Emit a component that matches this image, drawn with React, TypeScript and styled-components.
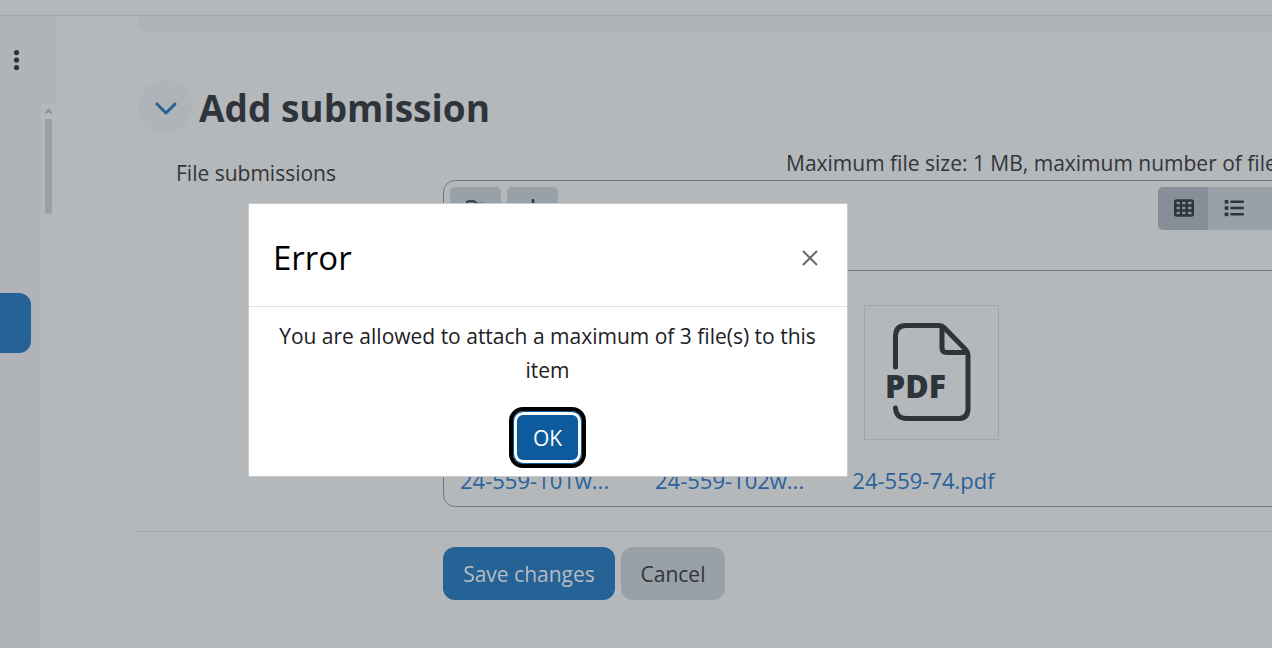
import React from "react";
import styled, { createGlobalStyle, css } from "styled-components";
import {
  FaChevronDown,
  FaDownload,
  FaEllipsisVertical,
  FaFolder,
  FaList,
  FaRegFolder,
  FaTableCells,
} from "react-icons/fa6";

const color = {
  page: "#b4b8bb",
  drawer: "#b0b4b9",
  line: "#a2a6aa",
  frame: "#6f7783",
  ink: "#2f343b",
  text: "#323539",
  blue: "#256296",
  link: "#2a629c",
  muted: "#98a0a8",
  mutedActive: "#868e98",
};

const GlobalStyle = createGlobalStyle`
  *, *::before, *::after { box-sizing: border-box; }
  body {
    margin: 0;
    background: ${color.page};
    color: ${color.text};
    font-family: "Open Sans", "Noto Sans", sans-serif;
    font-size: 21px;
    line-height: 34px;
  }
  button { font: inherit; cursor: pointer; }
`;

const Page = styled.div`
  display: flex;
  flex-direction: column;
  min-height: 100vh;
  overflow: hidden;
`;

const TopBar = styled.header`
  height: 16px;
  border-bottom: 1px solid ${color.line};
`;

const Body = styled.div`
  display: flex;
  flex: 1;
`;

const Drawer = styled.aside`
  display: flex;
  flex-direction: column;
  flex: 0 0 56px;
  background: ${color.drawer};
`;

const DrawerMenu = styled.button`
  display: flex;
  align-items: center;
  width: 32px;
  height: 88px;
  padding: 0 0 0 12px;
  border: 0;
  background: none;
  color: ${color.ink};
`;

const DrawerScroll = styled.div`
  display: flex;
  flex: 1;
  justify-content: space-between;
`;

const CurrentItem = styled.a`
  width: 31px;
  height: 60px;
  margin-top: 189px;
  border-radius: 0 12px 12px 0;
  background: ${color.blue};
`;

const ScrollTrack = styled.div`
  display: flex;
  flex-direction: column;
  gap: 5px;
  width: 15px;
  padding: 4px 4px 0;
  background: ${color.page};
`;

const ScrollThumb = styled.div`
  height: 95px;
  border-radius: 2px;
  background: #98a1aa;
`;

const Main = styled.main`
  flex: 1;
  min-width: 0;
  margin-left: 82px;
`;

const PreviousPanel = styled.div`
  height: 16px;
  border-radius: 0 0 0 10px;
  background: ${color.drawer};
`;

const SectionHeader = styled.div`
  display: flex;
  align-items: center;
  gap: 7px;
  margin-top: 48px;
`;

const CollapseButton = styled.button`
  display: flex;
  align-items: center;
  justify-content: center;
  width: 54px;
  height: 54px;
  padding: 0 0 0 2px;
  border: 0;
  border-radius: 50%;
  background: #afb4b8;
  color: ${color.blue};
`;

const SectionTitle = styled.h2`
  margin: 0;
  padding-top: 2px;
  color: ${color.ink};
  font-size: 37px;
  font-weight: 700;
  line-height: 52px;
`;

const FormRow = styled.div`
  display: flex;
  margin-top: 12px;
`;

const RowLabel = styled.div`
  flex: 0 0 305px;
  padding: 10px 0 0 38px;
`;

const RowContent = styled.div`
  flex: 1;
  min-width: 0;
`;

const Restrictions = styled.div`
  padding-left: 343px;
  white-space: nowrap;
`;

const FileManager = styled.div`
  margin-right: -120px;
  border: 1px solid ${color.frame};
  border-radius: 12px;
`;

const Toolbar = styled.div`
  display: flex;
  gap: 6px;
  height: 90px;
  padding: 6px;
  border-bottom: 1px solid ${color.frame};
`;

const ToolButton = styled.button<{ $active?: boolean }>`
  display: flex;
  align-items: center;
  justify-content: center;
  width: 51px;
  height: 43px;
  padding: 0;
  border: 0;
  border-radius: 5px;
  background: ${(p) => (p.$active ? color.mutedActive : color.muted)};
  color: ${color.ink};
`;

const ViewSwitch = styled.div`
  display: flex;
  margin: 0 77px 0 auto;

  ${ToolButton} {
    width: 50px;
    padding: 0 0 1px 1px;
    border-radius: 0;
  }
  ${ToolButton}:first-child { border-radius: 5px 0 0 5px; }
  ${ToolButton}:last-child { border-radius: 0 5px 5px 0; }
`;

const Files = styled.div`
  display: flex;
  gap: 48px;
  padding: 34px 16px 9px;
`;

const FileTile = styled.a`
  display: flex;
  flex-direction: column;
  gap: 23px;
  width: 147px;
  color: ${color.link};
  font-size: 22px;
  text-align: center;
  text-decoration: none;
  white-space: nowrap;
`;

const Thumb = styled.span`
  display: flex;
  align-items: center;
  justify-content: center;
  width: 135px;
  height: 135px;
  margin-left: 14px;
  border: 1px solid ${color.line};
  color: ${color.ink};
`;

const Actions = styled.div`
  display: flex;
  gap: 6px;
  margin-top: 24px;
  padding: 15px 0 47px 305px;
  border-top: 1px solid ${color.line};
`;

const buttonShape = css`
  height: 53px;
  padding: 0 19px;
  border: 0;
  border-radius: 12px;
`;

const PrimaryButton = styled.button`
  ${buttonShape}
  min-width: 172px;
  background: ${color.blue};
  color: #b8bcc0;
`;

const SecondaryButton = styled.button`
  ${buttonShape}
  min-width: 104px;
  background: ${color.muted};
  color: ${color.text};
`;

const ModalLayer = styled.div`
  position: fixed;
  inset: 0;
  padding: 203px 0 0 248px;
`;

const Dialog = styled.section`
  width: 600px;
  border: 1px solid #c9cbcd;
  background: #fff;
  color: #1d2125;
`;

const DialogHeader = styled.header`
  display: flex;
  align-items: center;
  justify-content: space-between;
  height: 103px;
  padding: 6px 24px 0;
  border-bottom: 1px solid #dee2e6;
`;

const DialogTitle = styled.h3`
  margin: 0;
  color: #000;
  font-size: 33px;
  font-weight: 400;
  line-height: 48px;
`;

const CloseButton = styled.button`
  display: flex;
  padding: 4px;
  border: 0;
  background: none;
  color: #6a6a6a;
`;

const DialogBody = styled.div`
  display: flex;
  flex-direction: column;
  align-items: center;
  gap: 24px;
  padding: 12px 25px 12px 24px;
  text-align: center;
`;

const Message = styled.p`
  margin: 0;
`;

const ConfirmButton = styled.button`
  width: 69px;
  height: 53px;
  padding: 0;
  border: 1px solid #0f5a9c;
  border-radius: 10px;
  outline: 4px solid #000;
  background: #0d5a9e;
  box-shadow: inset 0 0 0 3px #fff;
  color: #fff;
`;

function PdfIcon() {
  return (
    <svg width="90" height="104" viewBox="0 0 90 104" fill="none" aria-hidden="true">
      <g stroke="currentColor" strokeWidth="5" strokeLinecap="round" strokeLinejoin="round">
        <path d="M8.500 46V14.500Q9 4.500 19 4.500H52Q55 4.500 57.500 7L78.500 28.500Q81 31 81 34V88.500Q80.500 97.500 71.500 97.500H19Q9 97 8.500 87" />
        <path d="M55 7V27Q55 31.500 59.500 31.500H79" />
      </g>
      <text
        x="-2"
        y="77"
        fill="currentColor"
        fontFamily="Open Sans, sans-serif"
        fontSize="32"
        fontWeight="800"
      >
        PDF
      </text>
    </svg>
  );
}

const files = [
  { name: "24-559-101w...", icon: false },
  { name: "24-559-102w...", icon: false },
  { name: "24-559-74.pdf", icon: true },
];

export default function App() {
  return (
    <>
      <GlobalStyle />
      <Page>
        <TopBar />
        <Body>
          <Drawer>
            <DrawerMenu aria-label="Course index options">
              <FaEllipsisVertical size={24} style={{ width: 9 }} />
            </DrawerMenu>
            <DrawerScroll>
              <CurrentItem href="#current" aria-label="Current activity" />
              <ScrollTrack>
                <svg width="7" height="6" viewBox="0 0 7 6" aria-hidden="true">
                  <path d="M0.500 5.500L3.500 2L6.500 5.500" fill="none" stroke="#8b9095" strokeWidth="2" />
                </svg>
                <ScrollThumb />
              </ScrollTrack>
            </DrawerScroll>
          </Drawer>
          <Main>
            <PreviousPanel />
            <SectionHeader>
              <CollapseButton aria-label="Collapse section">
                <FaChevronDown size={24} />
              </CollapseButton>
              <SectionTitle>Add submission</SectionTitle>
            </SectionHeader>
            <FormRow>
              <RowLabel id="files-label">File submissions</RowLabel>
              <RowContent>
                <Restrictions>Maximum file size: 1 MB, maximum number of files: 3</Restrictions>
                <FileManager role="group" aria-labelledby="files-label">
                  <Toolbar>
                    <ToolButton aria-label="Create folder">
                      <FaRegFolder size={20} />
                    </ToolButton>
                    <ToolButton aria-label="Download all">
                      <FaDownload size={20} />
                    </ToolButton>
                    <ViewSwitch>
                      <ToolButton $active aria-label="Icon view">
                        <FaTableCells size={20} />
                      </ToolButton>
                      <ToolButton aria-label="List view">
                        <FaList size={20} />
                      </ToolButton>
                      <ToolButton aria-label="Tree view">
                        <FaFolder size={20} />
                      </ToolButton>
                    </ViewSwitch>
                  </Toolbar>
                  <Files>
                    {files.map((file) => (
                      <FileTile href="#file" key={file.name}>
                        <Thumb>{file.icon && <PdfIcon />}</Thumb>
                        {file.name}
                      </FileTile>
                    ))}
                  </Files>
                </FileManager>
              </RowContent>
            </FormRow>
            <Actions>
              <PrimaryButton>Save changes</PrimaryButton>
              <SecondaryButton>Cancel</SecondaryButton>
            </Actions>
          </Main>
        </Body>
      </Page>
      <ModalLayer>
        <Dialog role="dialog" aria-modal="true" aria-labelledby="dialog-title">
          <DialogHeader>
            <DialogTitle id="dialog-title">Error</DialogTitle>
            <CloseButton aria-label="Close">
              <svg width="18" height="18" viewBox="0 0 18 18" aria-hidden="true">
                <path d="M2 2L16 16M16 2L2 16" stroke="currentColor" strokeWidth="2" />
              </svg>
            </CloseButton>
          </DialogHeader>
          <DialogBody>
            <Message>You are allowed to attach a maximum of 3 file(s) to this item</Message>
            <ConfirmButton>OK</ConfirmButton>
          </DialogBody>
        </Dialog>
      </ModalLayer>
    </>
  );
}
